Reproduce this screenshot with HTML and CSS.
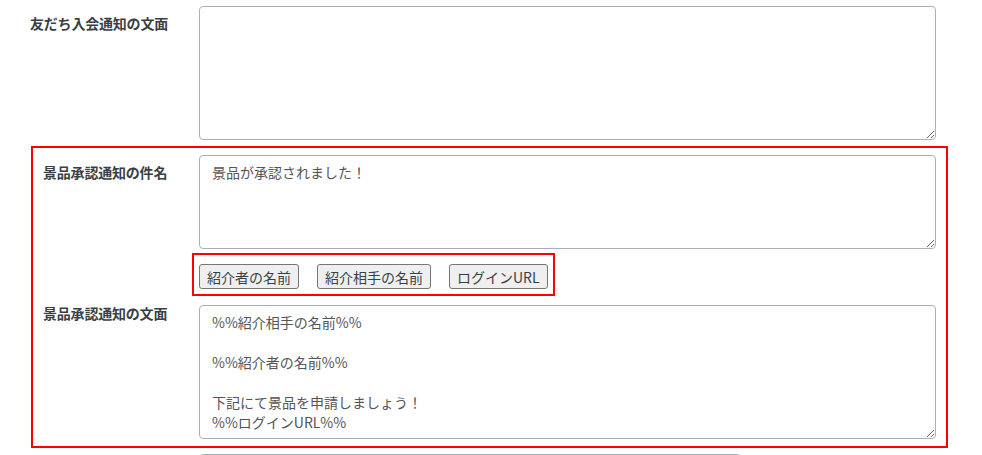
FILE: index.html
```html
<!DOCTYPE html>
<html lang="ja">
<head>
  <meta charset="UTF-8" />
  <meta name="viewport" content="width=device-width, initial-scale=1" />
  <title>通知設定</title>
  <link rel="stylesheet" href="styles.css">
</head>
<body>

<div class="form">
  <div class="row">
    <label class="label" for="join-body">友だち入会通知の文面</label>
    <textarea id="join-body" class="field tall"></textarea>
  </div>

  <div class="highlight">
    <div class="row inner">
      <label class="label" for="prize-subject">景品承認通知の件名</label>
      <div class="field-group">
        <textarea id="prize-subject" class="field short">景品が承認されました！</textarea>
        <div class="tag-buttons">
          <button type="button">紹介者の名前</button>
          <button type="button">紹介相手の名前</button>
          <button type="button">ログインURL</button>
        </div>
      </div>
    </div>

    <div class="row inner">
      <label class="label" for="prize-body">景品承認通知の文面</label>
      <textarea id="prize-body" class="field tall body-field">%%紹介相手の名前%%

%%紹介者の名前%%

下記にて景品を申請しましょう！
%%ログインURL%%</textarea>
    </div>
  </div>

  <div class="row">
    <label class="label" for="next-field"></label>
    <input id="next-field" class="field narrow" type="text" />
  </div>
</div>

</body>
</html>
```

FILE: styles.css
```css
body {
  margin: 0;
  padding: 6px 0 0 0;
  background: white;
  font-family: "Noto Sans CJK JP", sans-serif;
  font-size: 14px;
  color: #333;
}
.form {
  width: 948px;
}
.row {
  display: grid;
  grid-template-columns: 169px 737px;
  padding-left: 30px;
}
.row + .highlight,
.highlight + .row {
  margin-top: 6px;
}
.label {
  padding-top: 7px;
  font-weight: bold;
  line-height: 20px;
  color: #3a3f46;
  letter-spacing: -0.2px;
}
.field {
  box-sizing: border-box;
  width: 737px;
  margin: 0;
  padding: 6px 12px;
  border: 1px solid #a9b0b9;
  border-radius: 4px;
  font-family: "Noto Sans CJK JP", sans-serif;
  font-size: 14px;
  line-height: 20px;
  color: #555;
  background: white;
  display: block;
}
.tall {
  height: 134px;
}
.short {
  height: 94px;
}
.narrow {
  width: 542px;
  height: 34px;
}
.highlight {
  margin-left: 31px;
  width: 917px;
  box-sizing: border-box;
  border: 2px solid #ff0000;
  padding: 7px 10px 7px 10px;
}
.row.inner {
  grid-template-columns: 156px 737px;
  padding-left: 0;
}
.body-field {
  margin-top: 9px;
}
.tag-buttons {
  display: flex;
  gap: 18px;
  width: max-content;
  margin: 4px 0 0 -7px;
  padding: 9px 5px 5px 5px;
  border: 2px solid #ff0000;
}
.tag-buttons button {
  height: 25px;
  padding: 0 7px;
  border: 1px solid #767676;
  border-radius: 3px;
  background: #efefef;
  font-family: "Noto Sans CJK JP", sans-serif;
  font-size: 14px;
  line-height: 20px;
  color: #3a3f46;
  cursor: pointer;
}
```
